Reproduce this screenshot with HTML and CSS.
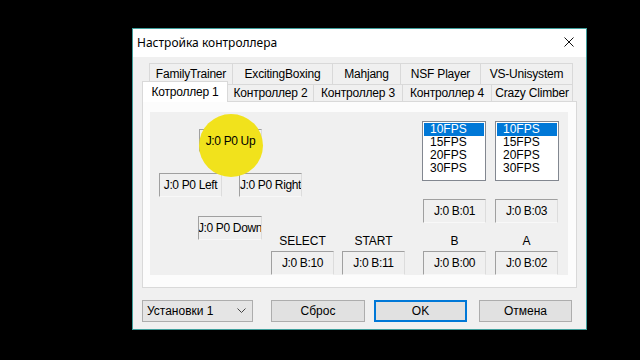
FILE: index.html
```html
<!DOCTYPE html>
<html lang="ru">
<head>
    <meta charset="UTF-8">
    <title>Настройка контроллера</title>
    <link rel="stylesheet" href="styles.css">
</head>
<body>
    <div class="window">
        <div class="titlebar">
            <span class="title">Настройка контроллера</span>
            <svg class="close" width="10" height="10" viewBox="0 0 10 10">
                <path d="M0.5 0.5L9.5 9.5M9.5 0.5L0.5 9.5" stroke="#111" stroke-width="1" fill="none"/>
            </svg>
        </div>

        <div class="content">
            <div class="tabs">
                <div class="tab-row upper">
                    <div class="tab">FamilyTrainer</div>
                    <div class="tab">ExcitingBoxing</div>
                    <div class="tab">Mahjang</div>
                    <div class="tab">NSF Player</div>
                    <div class="tab">VS-Unisystem</div>
                </div>
                <div class="tab-row lower">
                    <div class="tab active">Котроллер 1</div>
                    <div class="tab">Контроллер 2</div>
                    <div class="tab">Контроллер 3</div>
                    <div class="tab">Контроллер 4</div>
                    <div class="tab">Crazy Climber</div>
                </div>
            </div>

            <div class="panel">
                <div class="group">
                    <div class="field up"><span>J:0 P0 Up</span></div>
                    <div class="field left"><span>J:0 P0 Left</span></div>
                    <div class="field right"><span>J:0 P0 Right</span></div>
                    <div class="field down"><span>J:0 P0 Down</span></div>

                    <div class="list list-b">
                        <div class="item selected">10FPS</div>
                        <div class="item">15FPS</div>
                        <div class="item">20FPS</div>
                        <div class="item">30FPS</div>
                    </div>
                    <div class="list list-a">
                        <div class="item selected">10FPS</div>
                        <div class="item">15FPS</div>
                        <div class="item">20FPS</div>
                        <div class="item">30FPS</div>
                    </div>

                    <div class="field turbo-b"><span>J:0 B:01</span></div>
                    <div class="field turbo-a"><span>J:0 B:03</span></div>

                    <div class="label col-select">SELECT</div>
                    <div class="label col-start">START</div>
                    <div class="label col-b">B</div>
                    <div class="label col-a">A</div>

                    <div class="field bottom col-select"><span>J:0 B:10</span></div>
                    <div class="field bottom col-start"><span>J:0 B:11</span></div>
                    <div class="field bottom col-b"><span>J:0 B:00</span></div>
                    <div class="field bottom col-a"><span>J:0 B:02</span></div>
                </div>
            </div>

            <div class="actions">
                <div class="combo">
                    <span>Установки 1</span>
                    <svg width="9" height="6" viewBox="0 0 9 6">
                        <path d="M0.5 0.5L4.5 4.5L8.5 0.5" stroke="#444" stroke-width="1" fill="none"/>
                    </svg>
                </div>
                <button class="btn reset">Сброс</button>
                <button class="btn ok">OK</button>
                <button class="btn cancel">Отмена</button>
            </div>
        </div>
    </div>
</body>
</html>
```

FILE: styles.css
```css
* {
    margin: 0;
    padding: 0;
    box-sizing: border-box;
}

body {
    background: #000;
    height: 360px;
    overflow: hidden;
    padding: 28px 0 0 132px;
    font-family: "Liberation Sans", Arial, sans-serif;
    font-size: 12px;
    color: #000;
}

.window {
    width: 455px;
    height: 302px;
    border: 1px solid #3f9f9c;
    background: #f0f0f0;
    display: flex;
    flex-direction: column;
}

.titlebar {
    height: 28px;
    background: #fff;
    display: flex;
    align-items: center;
    justify-content: space-between;
    padding: 0 12px 2px 4px;
}

.title {
    font-family: "Noto Sans", "Open Sans", sans-serif;
    font-size: 12px;
}

.content {
    padding: 6px 0 0 9px;
}

/* tabs */

.tabs {
    width: 435px;
}

.tab-row {
    display: flex;
}

.tab-row.upper {
    height: 21px;
    padding-left: 7px;
}

.tab-row.lower {
    height: 17px;
    align-items: flex-end;
}

.tab {
    height: 100%;
    display: flex;
    align-items: center;
    justify-content: center;
    border: 1px solid #d9d9d9;
    border-bottom: none;
    background: #f0f0f0;
    margin-left: -1px;
    white-space: nowrap;
    letter-spacing: -0.2px;
}

.tab:first-child {
    margin-left: 0;
}

.upper .tab:nth-child(1) { width: 84px; }
.upper .tab:nth-child(2) { width: 101px; }
.upper .tab:nth-child(3) { width: 69px; }
.upper .tab:nth-child(4) { width: 81px; }
.upper .tab:nth-child(5) { width: 93px; }

.lower .tab:nth-child(1) { width: 86px; }
.lower .tab:nth-child(2) { width: 87px; }
.lower .tab:nth-child(3) { width: 90px; }
.lower .tab:nth-child(4) { width: 90px; }
.lower .tab:nth-child(5) { width: 82px; }

.tab.active {
    height: 21px;
    margin-bottom: -1px;
    background: #fff;
    position: relative;
    z-index: 1;
}

/* panel */

.panel {
    width: 435px;
    height: 187px;
    border: 1px solid #d9d9d9;
    background: #fcfcfc;
    padding: 10px 8px 0 7px;
}

.group {
    width: 418px;
    height: 163px;
    background: #f0f0f0;
    display: grid;
    grid-template-columns: 9px 40px 40px 32px 71px 80px 73px 73px;
    grid-template-rows: 9px 8px 44px 26px 17px 18px 17px 24px;
}

.field {
    width: 63px;
    height: 24px;
    border-top: 1px solid #a0a0a0;
    border-left: 1px solid #a0a0a0;
    border-right: 1px solid #dcdcdc;
    border-bottom: 1px solid #f8f8f8;
    display: flex;
    align-items: center;
    justify-content: center;
    white-space: nowrap;
    overflow: hidden;
    justify-self: start;
    align-self: start;
    letter-spacing: -0.35px;
}

.up {
    grid-column: 3;
    grid-row: 3;
    height: 23px;
    position: relative;
    overflow: visible;
}

.up::before {
    content: '';
    position: absolute;
    left: -1px;
    top: -16px;
    width: 64px;
    height: 63px;
    border-radius: 50%;
    background: #f1e21c;
}

.up span {
    position: relative;
    z-index: 1;
}

.left {
    grid-column: 2;
    grid-row: 4;
}

.right {
    grid-column: 4;
    grid-row: 4;
}

.down {
    grid-column: 3;
    grid-row: 6;
    width: 64px;
    margin-left: -1px;
}

.list {
    grid-row: 2 / span 6;
    width: 64px;
    height: 60px;
    border: 1px solid #828790;
    background: #fff;
    padding: 1px;
    align-self: start;
}

.list-b { grid-column: 7; }
.list-a { grid-column: 8; }

.item {
    height: 13px;
    line-height: 13px;
    padding-left: 6px;
}

.item.selected {
    background: #0078d7;
    color: #fff;
}

.turbo-b {
    grid-column: 7;
    grid-row: 5;
    margin-left: 1px;
}

.turbo-a {
    grid-column: 8;
    grid-row: 5;
}

.label {
    grid-row: 7;
    width: 63px;
    text-align: center;
    line-height: 14px;
}

.bottom {
    grid-row: 8;
}

.col-select { grid-column: 5; }
.col-start { grid-column: 6; }
.col-b { grid-column: 7; margin-left: 1px; }
.col-a { grid-column: 8; }

/* bottom buttons */

.actions {
    display: flex;
    height: 22px;
    margin-top: 12px;
}

.combo {
    width: 111px;
    height: 22px;
    border: 1px solid #adadad;
    background: #e5e5e5;
    display: flex;
    align-items: center;
    justify-content: space-between;
    padding: 0 6px 0 4px;
}

.btn {
    height: 22px;
    border: 1px solid #adadad;
    background: #e1e1e1;
    font-family: "Liberation Sans", Arial, sans-serif;
    font-size: 12px;
    color: #000;
}

.reset {
    width: 94px;
    margin-left: 18px;
}

.ok {
    width: 93px;
    margin-left: 9px;
    border: 2px solid #0078d7;
}

.cancel {
    width: 93px;
    margin-left: 12px;
}
```
